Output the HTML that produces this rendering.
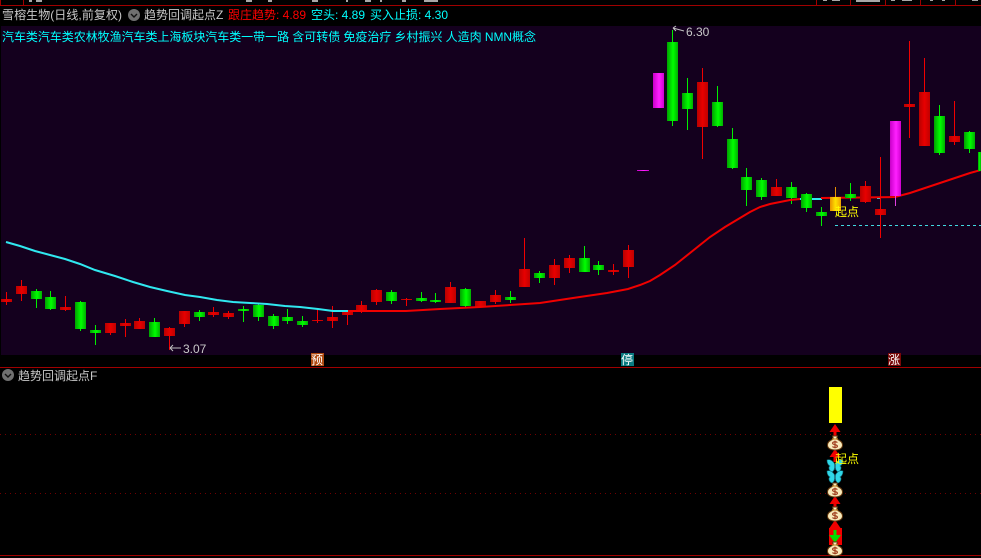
<!DOCTYPE html>
<html><head><meta charset="utf-8"><style>
html,body{margin:0;padding:0;background:#000;width:981px;height:558px;overflow:hidden}
svg{display:block}
text{font-family:"WenQuanYi Zen Hei","Liberation Sans","Noto Sans CJK SC",sans-serif;font-size:12px}
.n{font-family:"Liberation Sans",sans-serif}
.c rect{shape-rendering:crispEdges}
.r{fill:#f00000}.rb{fill:url(#gr)}.g{fill:#00f000}.gb{fill:url(#gg)}.m{fill:url(#gm)}
</style></head><body>
<svg width="981" height="558" viewBox="0 0 981 558" xmlns="http://www.w3.org/2000/svg">
<defs>
<linearGradient id="gr"><stop offset="0" stop-color="#b80000"/><stop offset=".5" stop-color="#e80000"/><stop offset="1" stop-color="#c00000"/></linearGradient>
<linearGradient id="gg"><stop offset="0" stop-color="#00a000"/><stop offset=".55" stop-color="#00ff00"/><stop offset="1" stop-color="#00b000"/></linearGradient>
<linearGradient id="gm"><stop offset="0" stop-color="#c800c8"/><stop offset=".55" stop-color="#ff20ff"/><stop offset="1" stop-color="#d000d0"/></linearGradient>
<linearGradient id="gy"><stop offset="0" stop-color="#e89000"/><stop offset=".5" stop-color="#ffe000"/><stop offset="1" stop-color="#f0a000"/></linearGradient>
<g id="bag">
<path d="M-2.500-7 L2.500-7 L1.500-4 C5.500-2.500 7.500-0.500 7.500 2 C7.500 5.200 4.500 7 0 7 C-4.500 7 -7.500 5.200 -7.500 2 C-7.500-0.500 -5.500-2.500 -1.500-4Z" fill="#f8eabc" stroke="#6a3c10" stroke-width="1"/>
<path d="M-3-4 L3-4" stroke="#c89030" stroke-width="1.2"/>
<path d="M2.400-.4 C1-1.800-2.600-1.400-2.400.4 C-2.200 2 2.400 1.200 2.400 3.200 C2.400 4.700-1.300 4.900-2.600 3.600 M0-2.400 L0 5.400" fill="none" stroke="#a04020" stroke-width="1.2"/>
</g>
<g id="fly">
<path d="M0-1 C-2-6-6-7-8-6 C-8-3-7-1-5 0 C-7 1-6 5-3 6 C-1 5 0 2 0 0 C0 2 1 5 3 6 C6 5 7 1 5 0 C7-1 8-3 8-6 C6-7 2-6 0-1Z" fill="#30d8e8" stroke="#0a6878" stroke-width=".6"/>
<path d="M0-3L0 4" stroke="#103040" stroke-width="1"/>
</g>
<path id="up" d="M0 0 L5.500 8 L1.500 8 L1.500 13 L-1.500 13 L-1.500 8 L-5.500 8Z" fill="#f00000"/>
</defs>
<rect width="981" height="558" fill="#000"/>
<!-- top strip -->
<g class="c">
<rect x="0" y="5" width="981" height="1" fill="#a00000"/>
<rect x="0" y="0" width="1" height="5" fill="#a00000"/>
<rect x="23" y="0" width="1" height="5" fill="#a00000"/>
<rect x="816" y="0" width="1" height="5" fill="#a00000"/><rect x="850" y="0" width="1" height="5" fill="#a00000"/><rect x="885" y="0" width="1" height="5" fill="#a00000"/><rect x="920" y="0" width="1" height="5" fill="#a00000"/><rect x="955" y="0" width="1" height="5" fill="#a00000"/>
<g fill="#a8a8a8">
<rect x="29" y="0" width="3" height="2"/><rect x="36" y="0" width="6" height="2"/><rect x="246" y="0" width="6" height="2"/><rect x="268" y="0" width="4" height="2"/><rect x="312" y="0" width="6" height="2"/><rect x="346" y="0" width="2" height="2"/><rect x="365" y="0" width="6" height="2"/><rect x="380" y="0" width="2" height="2"/><rect x="402" y="0" width="4" height="2"/><rect x="424" y="0" width="14" height="2"/>
<rect x="823" y="0" width="4" height="1"/><rect x="832" y="0" width="8" height="1"/><rect x="856" y="0" width="24" height="2"/><rect x="891" y="0" width="4" height="1"/><rect x="902" y="0" width="10" height="1"/><rect x="930" y="0" width="3" height="1"/><rect x="942" y="0" width="3" height="1"/><rect x="972" y="0" width="6" height="1"/>
</g>
<rect x="1" y="26" width="980" height="329" fill="#14001e"/>
<rect x="0" y="367" width="981" height="1" fill="#a00000"/>
<rect x="0" y="555" width="981" height="1" fill="#a00000"/>
</g>
<!-- header -->
<text x="2" y="19" fill="#c8c8c8" textLength="120" lengthAdjust="spacing">雪榕生物(日线,前复权)</text>
<circle cx="134" cy="15" r="6" fill="#707070"/><path d="M131 14l3 3 3-3" fill="none" stroke="#111" stroke-width="1.4"/>
<text x="144" y="19" fill="#c8c8c8">趋势回调起点Z</text>
<text x="228" y="19" fill="#ff0000">跟庄趋势: 4.89</text>
<text x="311" y="19" fill="#00ffff">空头: 4.89</text>
<text x="370" y="19" fill="#00ffff">买入止损: 4.30</text>
<text x="2" y="41" fill="#00ffff" textLength="534" lengthAdjust="spacing">汽车类汽车类农林牧渔汽车类上海板块汽车类一带一路 含可转债 免疫治疗 乡村振兴 人造肉 NMN概念</text>
<!-- candles -->
<g class="c">
<rect class="r" x="6" y="292" width="1" height="13"/><rect class="rb" x="1" y="299" width="11" height="3"/>
<rect class="r" x="21" y="280" width="1" height="21"/><rect class="rb" x="16" y="286" width="11" height="8"/>
<rect class="g" x="36" y="289" width="1" height="19"/><rect class="gb" x="31" y="291" width="11" height="8"/>
<rect class="g" x="50" y="291" width="1" height="19"/><rect class="gb" x="45" y="297" width="11" height="12"/>
<rect class="r" x="65" y="296" width="1" height="15"/><rect class="rb" x="60" y="307" width="11" height="3"/>
<rect class="g" x="80" y="301" width="1" height="30"/><rect class="gb" x="75" y="302" width="11" height="27"/>
<rect class="g" x="95" y="325" width="1" height="20"/><rect class="gb" x="90" y="330" width="11" height="3"/>
<rect class="r" x="110" y="323" width="1" height="12"/><rect class="rb" x="105" y="323" width="11" height="10"/>
<rect class="r" x="125" y="319" width="1" height="18"/><rect class="rb" x="120" y="323" width="11" height="3"/>
<rect class="r" x="139" y="318" width="1" height="11"/><rect class="rb" x="134" y="321" width="11" height="8"/>
<rect class="g" x="154" y="318" width="1" height="19"/><rect class="gb" x="149" y="322" width="11" height="15"/>
<rect class="r" x="169" y="327" width="1" height="23"/><rect class="rb" x="164" y="328" width="11" height="8"/>
<rect class="r" x="184" y="311" width="1" height="16"/><rect class="rb" x="179" y="311" width="11" height="13"/>
<rect class="g" x="199" y="310" width="1" height="11"/><rect class="gb" x="194" y="312" width="11" height="5"/>
<rect class="r" x="213" y="307" width="1" height="10"/><rect class="rb" x="208" y="312" width="11" height="3"/>
<rect class="r" x="228" y="311" width="1" height="8"/><rect class="rb" x="223" y="313" width="11" height="4"/>
<rect class="g" x="243" y="306" width="1" height="16"/><rect class="gb" x="238" y="309" width="11" height="2"/>
<rect class="g" x="258" y="304" width="1" height="17"/><rect class="gb" x="253" y="305" width="11" height="12"/>
<rect class="g" x="273" y="314" width="1" height="15"/><rect class="gb" x="268" y="316" width="11" height="10"/>
<rect class="g" x="287" y="309" width="1" height="15"/><rect class="gb" x="282" y="317" width="11" height="4"/>
<rect class="g" x="302" y="316" width="1" height="11"/><rect class="gb" x="297" y="321" width="11" height="4"/>
<rect class="r" x="317" y="308" width="1" height="15"/><rect class="rb" x="312" y="320" width="11" height="1"/>
<rect class="r" x="332" y="306" width="1" height="22"/><rect class="rb" x="327" y="317" width="11" height="4"/>
<rect class="r" x="347" y="310" width="1" height="15"/><rect class="rb" x="342" y="312" width="11" height="3"/>
<rect class="r" x="361" y="301" width="1" height="12"/><rect class="rb" x="356" y="305" width="11" height="7"/>
<rect class="r" x="376" y="289" width="1" height="16"/><rect class="rb" x="371" y="290" width="11" height="12"/>
<rect class="g" x="391" y="290" width="1" height="14"/><rect class="gb" x="386" y="292" width="11" height="9"/>
<rect class="r" x="406" y="298" width="1" height="8"/><rect class="rb" x="401" y="299" width="11" height="1"/>
<rect class="g" x="421" y="292" width="1" height="10"/><rect class="gb" x="416" y="298" width="11" height="3"/>
<rect class="g" x="435" y="293" width="1" height="10"/><rect class="gb" x="430" y="300" width="11" height="2"/>
<rect class="r" x="450" y="282" width="1" height="21"/><rect class="rb" x="445" y="287" width="11" height="16"/>
<rect class="g" x="465" y="288" width="1" height="20"/><rect class="gb" x="460" y="289" width="11" height="17"/>
<rect class="rb" x="475" y="301" width="11" height="6"/>
<rect class="r" x="495" y="290" width="1" height="14"/><rect class="rb" x="490" y="295" width="11" height="7"/>
<rect class="g" x="510" y="291" width="1" height="12"/><rect class="gb" x="505" y="297" width="11" height="3"/>
<rect class="r" x="524" y="238" width="1" height="49"/><rect class="rb" x="519" y="269" width="11" height="18"/>
<rect class="g" x="539" y="271" width="1" height="12"/><rect class="gb" x="534" y="273" width="11" height="5"/>
<rect class="r" x="554" y="259" width="1" height="26"/><rect class="rb" x="549" y="265" width="11" height="13"/>
<rect class="r" x="569" y="255" width="1" height="18"/><rect class="rb" x="564" y="258" width="11" height="10"/>
<rect class="g" x="584" y="246" width="1" height="26"/><rect class="gb" x="579" y="258" width="11" height="14"/>
<rect class="g" x="598" y="261" width="1" height="14"/><rect class="gb" x="593" y="265" width="11" height="5"/>
<rect class="r" x="613" y="264" width="1" height="11"/><rect class="rb" x="608" y="270" width="11" height="2"/>
<rect class="r" x="628" y="245" width="1" height="33"/><rect class="rb" x="623" y="250" width="11" height="17"/>
<rect class="m" x="637" y="170" width="12" height="1"/>
<rect class="m" x="653" y="73" width="11" height="35"/>
<rect class="g" x="672" y="30" width="1" height="96"/><rect class="gb" x="667" y="42" width="11" height="79"/>
<rect class="g" x="687" y="78" width="1" height="52"/><rect class="gb" x="682" y="93" width="11" height="16"/>
<rect class="r" x="702" y="68" width="1" height="91"/><rect class="rb" x="697" y="82" width="11" height="45"/>
<rect class="g" x="717" y="86" width="1" height="41"/><rect class="gb" x="712" y="102" width="11" height="24"/>
<rect class="g" x="732" y="128" width="1" height="41"/><rect class="gb" x="727" y="139" width="11" height="29"/>
<rect class="g" x="746" y="168" width="1" height="38"/><rect class="gb" x="741" y="177" width="11" height="13"/>
<rect class="g" x="761" y="178" width="1" height="22"/><rect class="gb" x="756" y="180" width="11" height="17"/>
<rect class="r" x="776" y="179" width="1" height="17"/><rect class="rb" x="771" y="187" width="11" height="9"/>
<rect class="g" x="791" y="182" width="1" height="22"/><rect class="gb" x="786" y="187" width="11" height="11"/>
</g>
<!-- MA lines -->
<polyline fill="none" stroke="#30e8f0" stroke-width="2" points="6,242 20,246 35,251 50,255 65,259 80,264 95,270 115,276 133,282 150,287 167,291 185,295 200,297 217,300 233,302 250,303 267,304 285,306 300,307 318,309 333,311 348,311"/>
<polyline fill="none" stroke="#30e8f0" stroke-width="2" points="800,199 822,199"/>
<polyline fill="none" stroke="#30e8f0" stroke-width="2" points="877,198 880,198"/>
<polyline fill="none" stroke="#f00000" stroke-width="2" points="348,311 406,311 440,309 480,307 510,305 540,303 573,298 607,293 628,289 640,285 650,281 660,275 675,265 690,253 700,245 710,237 725,227 740,218 750,212 760,207 770,204 780,202 790,200 800,199"/>
<polyline fill="none" stroke="#f00000" stroke-width="2" points="821,198 895,197 910,193 925,188 940,183 955,178 970,173 981,170"/>
<g class="c">
<rect class="g" x="806" y="193" width="1" height="19"/><rect class="gb" x="801" y="194" width="11" height="14"/>
<rect class="g" x="821" y="207" width="1" height="19"/><rect class="gb" x="816" y="212" width="11" height="4"/>
<rect x="835" y="187" width="1" height="10" fill="#e89000"/><rect fill="url(#gy)" x="830" y="197" width="11" height="14"/>
<rect class="g" x="850" y="183" width="1" height="18"/><rect class="gb" x="845" y="194" width="11" height="4"/>
<rect class="r" x="865" y="181" width="1" height="22"/><rect class="rb" x="860" y="186" width="11" height="16"/>
<rect class="r" x="880" y="157" width="1" height="81"/><rect class="rb" x="875" y="209" width="11" height="6"/>
<rect x="895" y="196" width="1" height="10" fill="#e040e0"/><rect class="m" x="890" y="121" width="11" height="75"/>
<rect class="r" x="909" y="41" width="1" height="97"/><rect class="rb" x="904" y="104" width="11" height="3"/>
<rect class="r" x="924" y="58" width="1" height="88"/><rect class="rb" x="919" y="92" width="11" height="54"/>
<rect class="g" x="939" y="105" width="1" height="50"/><rect class="gb" x="934" y="116" width="11" height="37"/>
<rect class="r" x="954" y="101" width="1" height="44"/><rect class="rb" x="949" y="136" width="11" height="6"/>
<rect class="g" x="969" y="131" width="1" height="22"/><rect class="gb" x="964" y="132" width="11" height="17"/>
<rect class="gb" x="978" y="152" width="3" height="19"/>
</g>
<line x1="835" y1="225.5" x2="981" y2="225.5" stroke="#40d8e0" stroke-width="1" stroke-dasharray="3 3" shape-rendering="crispEdges"/>
<!-- labels -->
<text x="835" y="216" fill="#ffff00">起点</text>
<path d="M673 28 L684 31 M673 28 l3-2 M673 28 l3 3" stroke="#c0c0c0" fill="none"/>
<text class="n" x="686" y="36" fill="#c8c8c8">6.30</text>
<path d="M170 348 H181 M170 348 l3-3 M170 348 l3 3" stroke="#c0c0c0" fill="none"/>
<text class="n" x="183" y="353" fill="#c8c8c8">3.07</text>
<!-- tags -->
<g class="c"><rect x="311" y="353" width="13" height="13" fill="#b04a10"/><rect x="621" y="353" width="13" height="13" fill="#0a7a80"/><rect x="888" y="353" width="13" height="13" fill="#780808"/></g>
<text x="311" y="364" fill="#fff">预</text>
<text x="621" y="364" fill="#fff">停</text>
<text x="888" y="364" fill="#fff">涨</text>
<!-- lower pane -->
<circle cx="8" cy="375" r="6" fill="#707070"/><path d="M5 374l3 3 3-3" fill="none" stroke="#111" stroke-width="1.4"/>
<text x="18" y="380" fill="#c8c8c8">趋势回调起点F</text>
<line x1="0" y1="434.5" x2="981" y2="434.5" stroke="#700000" stroke-dasharray="1 4" shape-rendering="crispEdges"/>
<line x1="0" y1="493.5" x2="981" y2="493.5" stroke="#700000" stroke-dasharray="1 4" shape-rendering="crispEdges"/>
<g class="c"><rect x="829" y="387" width="13" height="36" fill="#ffff00"/><rect x="829" y="528" width="13" height="17" fill="#f00000"/></g>
<use href="#up" x="835" y="424"/>
<use href="#up" x="835" y="449"/>
<use href="#up" x="835" y="496"/>
<use href="#up" x="835" y="520"/>
<use href="#bag" x="835" y="443"/>
<use href="#bag" x="835" y="490"/>
<use href="#bag" x="835" y="514"/>
<path d="M833.500 530h3v5h4.500l-6 8-6-8h4.500z" fill="#00e000"/>
<use href="#bag" x="835" y="549"/>
<use href="#fly" x="835" y="466"/>
<use href="#fly" x="835" y="477"/>
<text x="835" y="463" fill="#ffff00">起点</text>
</svg>
</body></html>
